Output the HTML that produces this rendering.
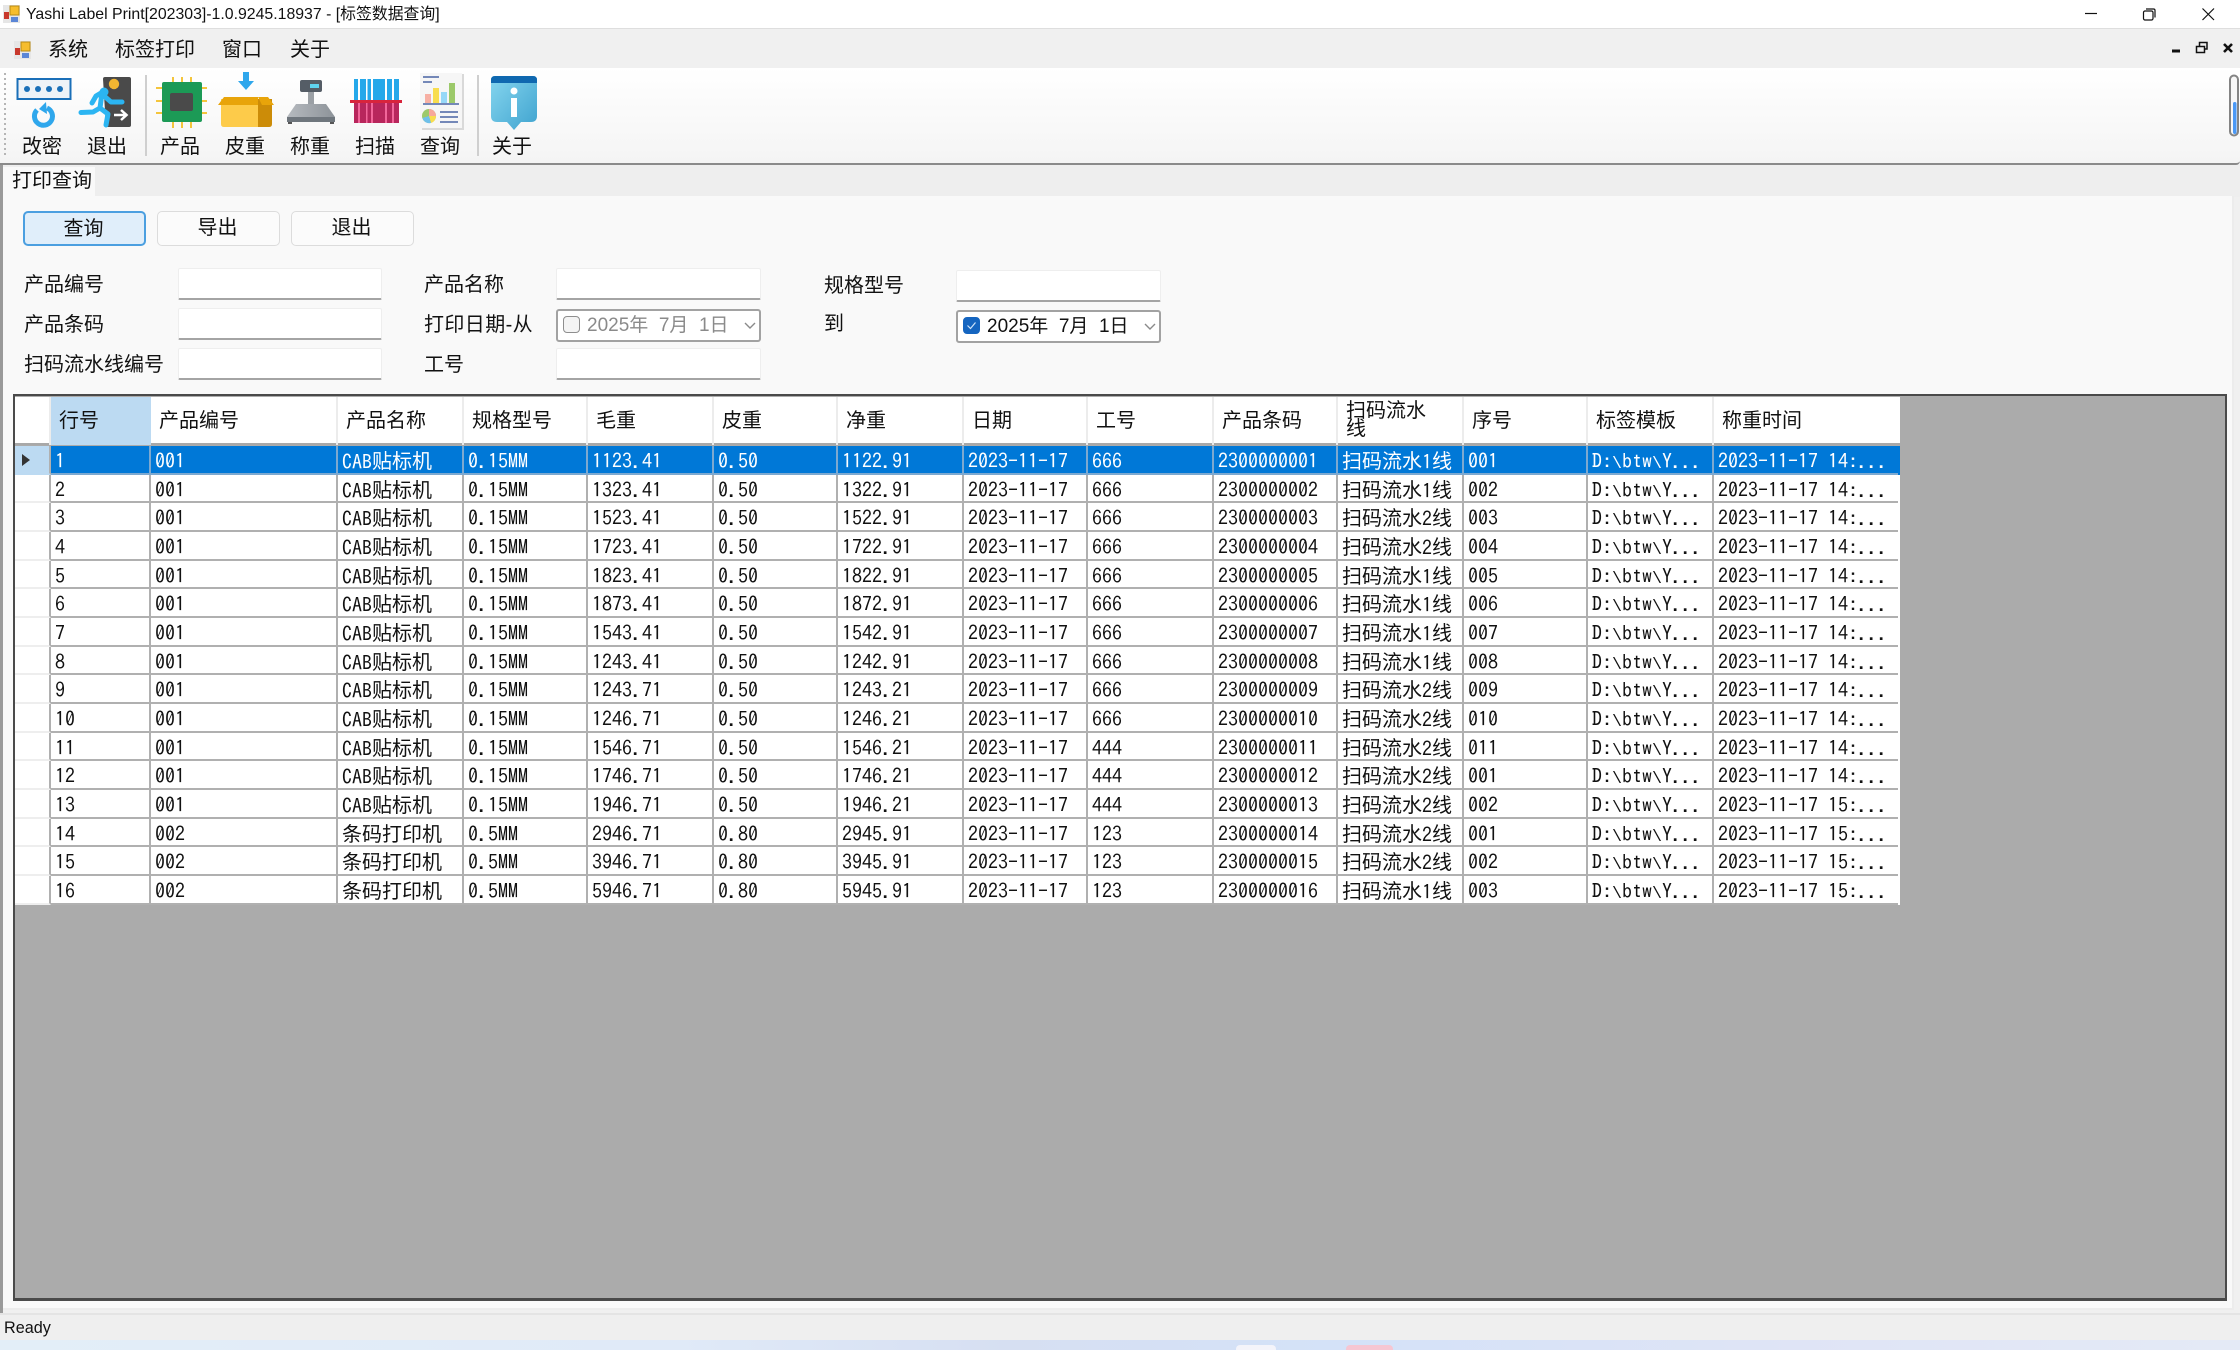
<!DOCTYPE html>
<html lang="zh-CN"><head><meta charset="utf-8"><title>Yashi Label Print</title>
<style>
*{box-sizing:border-box}
html,body{margin:0;padding:0}
body{width:2240px;height:1350px;position:relative;overflow:hidden;background:#f0f0f0;font-family:"Liberation Sans","Noto Sans CJK SC",sans-serif;color:#111}
.a{position:absolute;white-space:pre}
.t{font-size:20px;line-height:28px;height:28px;transform:translateY(-13px)}
.inp{position:absolute;width:204px;height:32px;background:#fff;border:1px solid #eeeeee;border-bottom:2px solid #a4a4a4;border-radius:2px}
.btn{position:absolute;top:211px;height:35px;width:123px;background:#fbfbfb;border:1.5px solid #dcdcdc;border-radius:5px;text-align:center;font-size:20px;line-height:33px;padding-right:2px}
.dp{position:absolute;width:205px;height:33px;background:#fff;border:2px solid #a2a2a2;border-radius:3px;font-size:19px;line-height:30px;padding-left:29px}
.cb{position:absolute;left:5px;top:5px;width:17px;height:17px;border-radius:4px;border:1.5px solid #8e8e8e;background:#f4f4f4}
.grid{position:absolute;left:13px;top:394px;width:2214px;height:907px;background:#ababab;border:2px solid #4a4a4a;border-bottom-width:3px;border-right-width:2px}
.head,.r{position:absolute;left:0;display:grid;grid-template-columns:36px 100px 187px 126px 124px 126px 124px 126px 124px 126px 124px 126px 124px 126px 184px;width:1885px}
.head{top:1px;height:48px;background:#fff;font-size:20px;border-bottom:2px solid #a8a8a8}
.head div{padding-left:8px;line-height:48px;border-right:2px solid #ececec;white-space:nowrap}
.head div:first-child{padding:0}
.head div:last-child{border-right:0}
.head .s{background:#bcdaf2;border-right:0}
.head .w{line-height:18px;padding-top:5px;white-space:normal;padding-right:24px}
.r{height:28.67px;margin-top:1px;font-family:"IPAGothic","Noto Sans CJK SC",monospace;font-size:20px;background:#fff;color:#111}
.r div{padding-left:4px;line-height:30px;border-right:2px solid #b0b0b0;border-bottom:2px solid #b0b0b0;white-space:pre;overflow:hidden}
.r div:first-child{padding:0;border-right:2px solid #b0b0b0;border-bottom:2px solid #eee}
.r div:last-child{border-right:0}
.r .c{font-family:"Noto Sans CJK SC",sans-serif;position:relative;top:-1px}
.r .b{font-family:"Liberation Mono",monospace;font-size:16.67px}
.sel{background:#0078d7;color:#fff}
.sel div{border-color:#7da9d0}
.sel div:first-child{background:#bcdaf2;border-bottom-color:#bcdaf2;position:relative}
</style></head><body>

<!-- title bar -->
<div class="a" style="left:0;top:0;width:2240px;height:29px;background:#fff;border-bottom:1px solid #dedede"></div>
<div class="a" style="left:26px;top:4px;font-size:15.85px;line-height:22px;font-family:'Liberation Sans','Noto Sans CJK SC',sans-serif">Yashi Label Print[202303]-1.0.9245.18937 - [标签数据查询]</div>

<!-- menu bar -->
<div class="a t" style="left:48px;top:49px">系统</div>
<div class="a t" style="left:115px;top:49px">标签打印</div>
<div class="a t" style="left:222px;top:49px">窗口</div>
<div class="a t" style="left:290px;top:49px">关于</div>

<!-- toolbar -->
<div class="a" style="left:0;top:68px;width:2240px;height:97px;background:linear-gradient(#fff,#f4f4f4);border-bottom:2px solid #8a8a8a;border-bottom-right-radius:4px"></div>

<svg class="a" style="left:0;top:0" width="2240" height="170" viewBox="0 0 2240 170">
 <!-- title icon -->
 <rect x="3" y="5" width="17" height="18" fill="#e6e6e6"/><rect x="10" y="6" width="9" height="9" fill="#f6bd2d" stroke="#b88a14"/><rect x="4" y="12" width="5" height="7" fill="#c8382c"/><rect x="11" y="17" width="7" height="5" fill="#5b86d6"/>
 <!-- menu icon -->
 <rect x="14" y="41" width="17" height="18" fill="#e6e6e6"/><rect x="21" y="42" width="9" height="9" fill="#f6bd2d" stroke="#b88a14"/><rect x="15" y="48" width="5" height="7" fill="#c8382c"/><rect x="22" y="53" width="7" height="5" fill="#5b86d6"/>
 <!-- window controls -->
 <path d="M2085 13.5H2097" stroke="#111" stroke-width="1.2"/>
 <rect x="2143.5" y="11" width="9.5" height="9" rx="1.5" fill="none" stroke="#111" stroke-width="1.2"/>
 <path d="M2146 9H2153.5Q2155 9 2155 10.5V17.5" fill="none" stroke="#111" stroke-width="1.2"/>
 <path d="M2202.5 8.5L2214 20M2214 8.5L2202.5 20" stroke="#111" stroke-width="1.2"/>
 <path d="M2172 51H2180" stroke="#111" stroke-width="3"/>
 <rect x="2196.5" y="46.5" width="8" height="6" fill="none" stroke="#111" stroke-width="1.5"/>
 <path d="M2199.5 46V42.5H2207V49H2204.5" fill="none" stroke="#111" stroke-width="1.5"/>
 <path d="M2224 44L2232 52M2232 44L2224 52" stroke="#111" stroke-width="2.6"/>
 <!-- right scroller -->
 <rect x="2230" y="75.5" width="8" height="60" rx="4" fill="#f7f7f7" stroke="#848484" stroke-width="2"/>
 <rect x="2233" y="102" width="3.5" height="32" rx="1.7" fill="#4a98f5"/>
 <!-- grip -->
 <g fill="#b5b5b5"><rect x="4" y="73" width="2" height="2"/><rect x="4" y="78" width="2" height="2"/><rect x="4" y="83" width="2" height="2"/><rect x="4" y="88" width="2" height="2"/><rect x="4" y="93" width="2" height="2"/><rect x="4" y="98" width="2" height="2"/><rect x="4" y="103" width="2" height="2"/><rect x="4" y="108" width="2" height="2"/><rect x="4" y="113" width="2" height="2"/><rect x="4" y="118" width="2" height="2"/><rect x="4" y="123" width="2" height="2"/><rect x="4" y="128" width="2" height="2"/><rect x="4" y="133" width="2" height="2"/><rect x="4" y="138" width="2" height="2"/><rect x="4" y="143" width="2" height="2"/><rect x="4" y="148" width="2" height="2"/><rect x="4" y="153" width="2" height="2"/></g>
 <!-- separators -->
 <rect x="145" y="75" width="2" height="81" fill="#cfcfcf"/><rect x="477" y="75" width="2" height="81" fill="#cfcfcf"/>
 <!-- 改密 -->
 <rect x="17.5" y="79" width="53" height="20" fill="#eef2f7" stroke="#1a6fb8" stroke-width="2"/>
 <g fill="#1a6fb8"><circle cx="27" cy="89" r="3"/><circle cx="38" cy="89" r="3"/><circle cx="49" cy="89" r="3"/><circle cx="60" cy="89" r="3"/></g>
 <path d="M37 110A9 9 0 1 0 47 108" fill="none" stroke="#2fa7ec" stroke-width="5"/>
 <path d="M46 102L39 109L47 114Z" fill="#2fa7ec"/>
 <!-- 退出 -->
 <path d="M103 79Q103 77 105 77H129Q131 77 131 79V125Q131 127 129 127H106Z" fill="#4a4a4a"/>
 <circle cx="114" cy="84" r="5.2" fill="#f2b632"/>
 <circle cx="104" cy="92" r="4.5" fill="#2bb5f2"/>
 <path d="M101 93L96 96L92 103M102 93L100 108L93 112L81 112.500M100 108L108 114L106 125M103 95L111 102L122 102" fill="none" stroke="#2bb5f2" stroke-width="5" stroke-linejoin="round" stroke-linecap="round"/>
 <path d="M114 115H126M121 110L126.500 115L121 120" fill="none" stroke="#fff" stroke-width="2.500"/>
 <!-- 产品 -->
 <g stroke="#f4c53c" stroke-width="2"><path d="M173 77V83M182 77V83M191 77V83M173 122V128M182 122V128M191 122V128M156 88H162M156 101H162M156 113H162M202 88H207M202 101H207M202 113H207"/></g>
 <rect x="162" y="82" width="40" height="40" rx="2" fill="#1c9a56"/>
 <rect x="170" y="93" width="23" height="18" rx="2" fill="#4a4a4a"/>
 <!-- 皮重 -->
 <path d="M243 72H249V81H254L246 90L238 81H243Z" fill="#2fa7ec"/>
 <path d="M221 99H258V127H224Q221 127 221 124Z" fill="#fdcb4a"/>
 <path d="M258 99H272V124Q272 127 269 127H258Z" fill="#cc8c08"/>
 <path d="M218 105L224 97H258V105ZM258 97H268L274 105H262Z" fill="#e8a40a"/>
 <!-- 称重 -->
 <rect x="300" y="80" width="22" height="12" rx="2" fill="#555d66"/><rect x="310" y="84" width="9" height="4" fill="#5fd3ef"/>
 <rect x="308" y="92" width="6" height="13" fill="#9ba0a5"/>
 <path d="M296 104H326L335 117V122H287V117Z" fill="url(#g1)"/>
 <rect x="287" y="117" width="48" height="5" fill="#6f767d"/><rect x="288" y="122" width="4" height="2" fill="#555"/><rect x="330" y="122" width="4" height="2" fill="#555"/>
 <defs><linearGradient id="g1" x1="0" x2="1"><stop offset="0" stop-color="#b6babf"/><stop offset="1" stop-color="#8d9399"/></linearGradient>
 <linearGradient id="g2" x1="0" y1="0" x2="1" y2="1"><stop offset="0" stop-color="#86d6ef"/><stop offset="1" stop-color="#3fa3cf"/></linearGradient></defs>
 <!-- 扫描 -->
 <rect x="354" y="79" width="45" height="22" fill="#25a8ea"/>
 <rect x="354" y="101" width="45" height="22" fill="#b8265c"/>
 <g fill="#fff"><rect x="358" y="79" width="2" height="22"/><rect x="366" y="79" width="1.500" height="22"/><rect x="371" y="79" width="2" height="22"/><rect x="385" y="79" width="2" height="22"/><rect x="392" y="79" width="2" height="22"/></g>
 <g fill="#f2669a"><rect x="358" y="103" width="2" height="20"/><rect x="366" y="103" width="1.500" height="20"/><rect x="371" y="103" width="2" height="20"/><rect x="385" y="103" width="2" height="20"/><rect x="392" y="103" width="2" height="20"/></g>
 <rect x="350" y="100" width="52" height="3" fill="#d8243c"/>
 <!-- 查询 -->
 <rect x="422" y="74" width="42" height="56" fill="#d9d9d9"/>
 <rect x="420" y="73" width="42" height="55" fill="#f6f6f6"/>
 <g fill="#7488b8"><rect x="423" y="76" width="16" height="2"/><rect x="423" y="81" width="9" height="2"/><rect x="423" y="103" width="36" height="2"/><rect x="440" y="111" width="18" height="2"/><rect x="440" y="116" width="18" height="2"/><rect x="440" y="121" width="18" height="2"/></g>
 <rect x="425" y="94" width="6" height="9" fill="#f7b0a4"/><rect x="433" y="88" width="6" height="15" fill="#f8dd4e"/><rect x="441" y="92" width="6" height="11" fill="#96d8f8"/><rect x="449" y="83" width="6" height="20" fill="#9cc96a"/>
 <circle cx="429" cy="116" r="7" fill="#9cc96a"/><path d="M429 116V109A7 7 0 0 1 436 116Z" fill="#f7a89c"/><path d="M429 116L436 116A7 7 0 0 1 431 123Z" fill="#f8dd4e"/><path d="M429 116L431 123A7 7 0 0 1 422.500 118Z" fill="#6fc0ea"/>
 <!-- 关于 -->
 <path d="M495 76H533Q537 76 537 80V116Q537 122 531 122H521L514 130L507 122H497Q491 122 491 116V80Q491 76 495 76Z" fill="url(#g2)"/>
 <path d="M491 83V80Q491 76 495 76H533Q537 76 537 80V83Z" fill="#0f68b0"/>
 <circle cx="514" cy="91" r="3.500" fill="#fff"/><rect x="511" y="98" width="6" height="19" fill="#fff"/>
</svg>

<div class="a t" style="left:22px;top:146px">改密</div>
<div class="a t" style="left:87px;top:146px">退出</div>
<div class="a t" style="left:160px;top:146px">产品</div>
<div class="a t" style="left:225px;top:146px">皮重</div>
<div class="a t" style="left:290px;top:146px">称重</div>
<div class="a t" style="left:355px;top:146px">扫描</div>
<div class="a t" style="left:420px;top:146px">查询</div>
<div class="a t" style="left:492px;top:146px">关于</div>

<!-- left window edge + panel -->
<div class="a" style="left:0;top:165px;width:2240px;height:32px;background:#eeeeee"></div>
<div class="a" style="left:3px;top:196px;width:2231px;height:1114px;background:#f9f9f9;border-bottom:2px solid #ececec;border-right:2px solid #ececec"></div>
<div class="a" style="left:0;top:165px;width:3px;height:1148px;background:#9a9a9a"></div>
<div class="a" style="left:3px;top:167px;width:92px;height:30px;background:#f9f9f9"></div>
<div class="a t" style="left:12px;top:180px">打印查询</div>

<!-- buttons -->
<div class="btn" style="left:23px;background:#e0eefa;border:2px solid #4b9fe0">查询</div>
<div class="btn" style="left:157px">导出</div>
<div class="btn" style="left:291px">退出</div>

<!-- form -->
<div class="a t" style="left:24px;top:284px">产品编号</div>
<div class="a t" style="left:24px;top:324px">产品条码</div>
<div class="a t" style="left:24px;top:364px">扫码流水线编号</div>
<div class="a t" style="left:424px;top:284px">产品名称</div>
<div class="a t" style="left:424px;top:324px;letter-spacing:.4px">打印日期-从</div>
<div class="a t" style="left:424px;top:364px">工号</div>
<div class="a t" style="left:824px;top:285px">规格型号</div>
<div class="a t" style="left:824px;top:323px">到</div>
<div class="inp" style="left:178px;top:268px"></div>
<div class="inp" style="left:178px;top:308px"></div>
<div class="inp" style="left:178px;top:348px"></div>
<div class="inp" style="left:556px;top:268px;width:205px"></div>
<div class="inp" style="left:556px;top:348px;width:205px"></div>
<div class="inp" style="left:956px;top:270px;width:205px"></div>
<div class="dp" style="left:556px;top:309px;color:#8a8a8a;white-space:pre"><span class="cb"></span>2025年  7月  1日<svg style="position:absolute;right:3px;top:11px" width="12" height="8"><path d="M1 1L6 6L11 1" fill="none" stroke="#8a8a8a" stroke-width="1.400"/></svg></div>
<div class="dp" style="left:956px;top:310px;color:#111;white-space:pre"><span class="cb" style="background:#1565c0;border-color:#1565c0"><svg style="position:absolute;left:2px;top:3px" width="11" height="9"><path d="M1.500 4.500L4.500 7.500L9.500 1.500" fill="none" stroke="#cfe4fa" stroke-width="1.200"/></svg></span>2025年  7月  1日<svg style="position:absolute;right:3px;top:11px" width="12" height="8"><path d="M1 1L6 6L11 1" fill="none" stroke="#8a8a8a" stroke-width="1.400"/></svg></div>

<!-- grid -->
<div class="grid">
<div class="head"><div></div><div class="s">行号</div><div>产品编号</div><div>产品名称</div><div>规格型号</div><div>毛重</div><div>皮重</div><div>净重</div><div>日期</div><div>工号</div><div>产品条码</div><div class="w">扫码流水线</div><div>序号</div><div>标签模板</div><div>称重时间</div></div>

<div class="r sel" style="top:49.0px"><div><svg style="position:absolute;left:7px;top:8px" width="8" height="12"><path d="M0 0L8 6L0 12Z" fill="#333"/></svg></div><div>1</div><div>001</div><div>CAB<span class="c">贴标机</span></div><div>0.15MM</div><div>1123.41</div><div>0.50</div><div>1122.91</div><div>2023-11-17</div><div>666</div><div>2300000001</div><div><span class="c">扫码流水</span>1<span class="c">线</span></div><div>001</div><div>D:<span class="b">\</span>btw<span class="b">\</span>Y...</div><div>2023-11-17 14:...</div></div>
<div class="r" style="top:77.67px"><div></div><div>2</div><div>001</div><div>CAB<span class="c">贴标机</span></div><div>0.15MM</div><div>1323.41</div><div>0.50</div><div>1322.91</div><div>2023-11-17</div><div>666</div><div>2300000002</div><div><span class="c">扫码流水</span>1<span class="c">线</span></div><div>002</div><div>D:<span class="b">\</span>btw<span class="b">\</span>Y...</div><div>2023-11-17 14:...</div></div>
<div class="r" style="top:106.34px"><div></div><div>3</div><div>001</div><div>CAB<span class="c">贴标机</span></div><div>0.15MM</div><div>1523.41</div><div>0.50</div><div>1522.91</div><div>2023-11-17</div><div>666</div><div>2300000003</div><div><span class="c">扫码流水</span>2<span class="c">线</span></div><div>003</div><div>D:<span class="b">\</span>btw<span class="b">\</span>Y...</div><div>2023-11-17 14:...</div></div>
<div class="r" style="top:135.01px"><div></div><div>4</div><div>001</div><div>CAB<span class="c">贴标机</span></div><div>0.15MM</div><div>1723.41</div><div>0.50</div><div>1722.91</div><div>2023-11-17</div><div>666</div><div>2300000004</div><div><span class="c">扫码流水</span>2<span class="c">线</span></div><div>004</div><div>D:<span class="b">\</span>btw<span class="b">\</span>Y...</div><div>2023-11-17 14:...</div></div>
<div class="r" style="top:163.68px"><div></div><div>5</div><div>001</div><div>CAB<span class="c">贴标机</span></div><div>0.15MM</div><div>1823.41</div><div>0.50</div><div>1822.91</div><div>2023-11-17</div><div>666</div><div>2300000005</div><div><span class="c">扫码流水</span>1<span class="c">线</span></div><div>005</div><div>D:<span class="b">\</span>btw<span class="b">\</span>Y...</div><div>2023-11-17 14:...</div></div>
<div class="r" style="top:192.35px"><div></div><div>6</div><div>001</div><div>CAB<span class="c">贴标机</span></div><div>0.15MM</div><div>1873.41</div><div>0.50</div><div>1872.91</div><div>2023-11-17</div><div>666</div><div>2300000006</div><div><span class="c">扫码流水</span>1<span class="c">线</span></div><div>006</div><div>D:<span class="b">\</span>btw<span class="b">\</span>Y...</div><div>2023-11-17 14:...</div></div>
<div class="r" style="top:221.02px"><div></div><div>7</div><div>001</div><div>CAB<span class="c">贴标机</span></div><div>0.15MM</div><div>1543.41</div><div>0.50</div><div>1542.91</div><div>2023-11-17</div><div>666</div><div>2300000007</div><div><span class="c">扫码流水</span>1<span class="c">线</span></div><div>007</div><div>D:<span class="b">\</span>btw<span class="b">\</span>Y...</div><div>2023-11-17 14:...</div></div>
<div class="r" style="top:249.69px"><div></div><div>8</div><div>001</div><div>CAB<span class="c">贴标机</span></div><div>0.15MM</div><div>1243.41</div><div>0.50</div><div>1242.91</div><div>2023-11-17</div><div>666</div><div>2300000008</div><div><span class="c">扫码流水</span>1<span class="c">线</span></div><div>008</div><div>D:<span class="b">\</span>btw<span class="b">\</span>Y...</div><div>2023-11-17 14:...</div></div>
<div class="r" style="top:278.36px"><div></div><div>9</div><div>001</div><div>CAB<span class="c">贴标机</span></div><div>0.15MM</div><div>1243.71</div><div>0.50</div><div>1243.21</div><div>2023-11-17</div><div>666</div><div>2300000009</div><div><span class="c">扫码流水</span>2<span class="c">线</span></div><div>009</div><div>D:<span class="b">\</span>btw<span class="b">\</span>Y...</div><div>2023-11-17 14:...</div></div>
<div class="r" style="top:307.03px"><div></div><div>10</div><div>001</div><div>CAB<span class="c">贴标机</span></div><div>0.15MM</div><div>1246.71</div><div>0.50</div><div>1246.21</div><div>2023-11-17</div><div>666</div><div>2300000010</div><div><span class="c">扫码流水</span>2<span class="c">线</span></div><div>010</div><div>D:<span class="b">\</span>btw<span class="b">\</span>Y...</div><div>2023-11-17 14:...</div></div>
<div class="r" style="top:335.7px"><div></div><div>11</div><div>001</div><div>CAB<span class="c">贴标机</span></div><div>0.15MM</div><div>1546.71</div><div>0.50</div><div>1546.21</div><div>2023-11-17</div><div>444</div><div>2300000011</div><div><span class="c">扫码流水</span>2<span class="c">线</span></div><div>011</div><div>D:<span class="b">\</span>btw<span class="b">\</span>Y...</div><div>2023-11-17 14:...</div></div>
<div class="r" style="top:364.37px"><div></div><div>12</div><div>001</div><div>CAB<span class="c">贴标机</span></div><div>0.15MM</div><div>1746.71</div><div>0.50</div><div>1746.21</div><div>2023-11-17</div><div>444</div><div>2300000012</div><div><span class="c">扫码流水</span>2<span class="c">线</span></div><div>001</div><div>D:<span class="b">\</span>btw<span class="b">\</span>Y...</div><div>2023-11-17 14:...</div></div>
<div class="r" style="top:393.04px"><div></div><div>13</div><div>001</div><div>CAB<span class="c">贴标机</span></div><div>0.15MM</div><div>1946.71</div><div>0.50</div><div>1946.21</div><div>2023-11-17</div><div>444</div><div>2300000013</div><div><span class="c">扫码流水</span>2<span class="c">线</span></div><div>002</div><div>D:<span class="b">\</span>btw<span class="b">\</span>Y...</div><div>2023-11-17 15:...</div></div>
<div class="r" style="top:421.71px"><div></div><div>14</div><div>002</div><div><span class="c">条码打印机</span></div><div>0.5MM</div><div>2946.71</div><div>0.80</div><div>2945.91</div><div>2023-11-17</div><div>123</div><div>2300000014</div><div><span class="c">扫码流水</span>2<span class="c">线</span></div><div>001</div><div>D:<span class="b">\</span>btw<span class="b">\</span>Y...</div><div>2023-11-17 15:...</div></div>
<div class="r" style="top:450.38px"><div></div><div>15</div><div>002</div><div><span class="c">条码打印机</span></div><div>0.5MM</div><div>3946.71</div><div>0.80</div><div>3945.91</div><div>2023-11-17</div><div>123</div><div>2300000015</div><div><span class="c">扫码流水</span>2<span class="c">线</span></div><div>002</div><div>D:<span class="b">\</span>btw<span class="b">\</span>Y...</div><div>2023-11-17 15:...</div></div>
<div class="r" style="top:479.05px"><div></div><div>16</div><div>002</div><div><span class="c">条码打印机</span></div><div>0.5MM</div><div>5946.71</div><div>0.80</div><div>5945.91</div><div>2023-11-17</div><div>123</div><div>2300000016</div><div><span class="c">扫码流水</span>1<span class="c">线</span></div><div>003</div><div>D:<span class="b">\</span>btw<span class="b">\</span>Y...</div><div>2023-11-17 15:...</div></div>
</div>

<!-- status bar -->
<div class="a" style="left:0;top:1313px;width:2240px;height:27px;background:#efefef;border-top:2px solid #e4e4e4"></div>
<div class="a" style="left:4px;top:1318px;font-size:16.2px;line-height:20px;color:#111">Ready</div>
<div class="a" style="left:0;top:1340px;width:2240px;height:10px;background:linear-gradient(90deg,#e3eef8 0%,#e0eaf8 30%,#d6dff2 45%,#d4e2f8 60%,#dfe4f6 80%,#e4eaf6 100%)"></div>
<div class="a" style="left:1236px;top:1345px;width:40px;height:5px;background:#f4f4fa;border-radius:4px 4px 0 0"></div>
<div class="a" style="left:1346px;top:1345px;width:47px;height:5px;background:#f6c6d2;border-radius:4px 4px 0 0"></div>
</body></html>
